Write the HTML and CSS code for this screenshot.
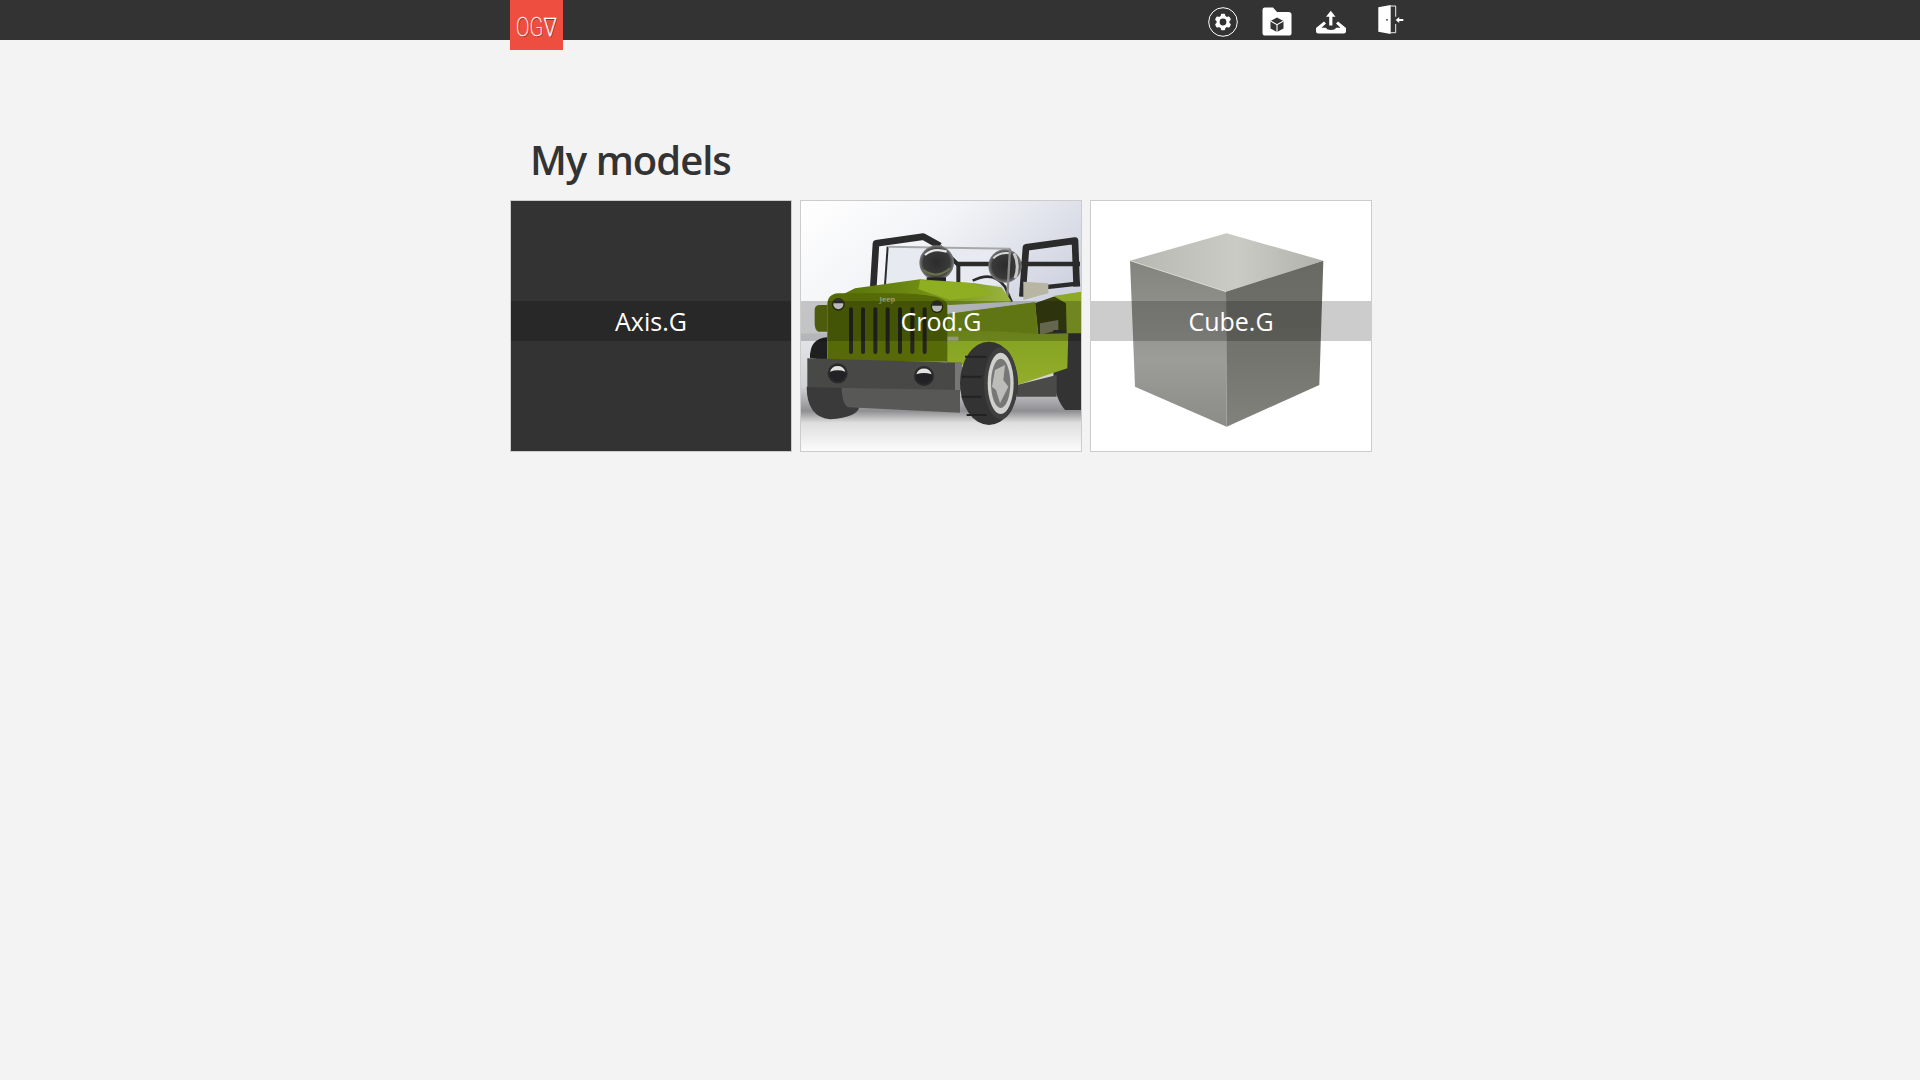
FILE: index.html
```html
<!DOCTYPE html>
<html lang="en">
<head>
<meta charset="utf-8">
<title>My models</title>
<link rel="stylesheet" href="styles.css">
</head>
<body>
<header class="topbar">
  <div class="topbar-inner">
    <a class="logo"><span class="logo-text">OG∇</span></a>
    <nav class="tools">
      <a class="tool">
        <svg viewBox="0 0 30 30" width="30" height="30">
          <circle cx="15" cy="15" r="14.3" fill="none" stroke="#fff" stroke-width="1"/>
          <g fill="#fff">
            <rect x="12.800" y="6.800" width="4.400" height="16.400" rx="1.200"/>
            <rect x="12.800" y="6.800" width="4.400" height="16.400" rx="1.200" transform="rotate(60 15 15)"/>
            <rect x="12.800" y="6.800" width="4.400" height="16.400" rx="1.200" transform="rotate(120 15 15)"/>
          </g>
          <circle cx="15" cy="15" r="6.500" fill="#fff"/>
          <circle cx="15" cy="15" r="3.400" fill="#333"/>
        </svg>
      </a>
      <a class="tool">
        <svg viewBox="0 0 30 30" width="30" height="30"><path fill="#fff" d="M1 3.500Q1 1 3 1h8.500l4 4.500H27Q30 5.500 30 8v19q0 2-2 2H3q-2 0-2-2z" transform="translate(-.5 -.5)"/><path fill="#333" d="M15 10.500l6.500 3.600v7.300L15 25l-6.500-3.600v-7.300z"/><path fill="none" stroke="#fff" stroke-width="1.100" d="M8.500 14.100L15 17.700l6.500-3.600M15 17.700V25"/></svg>
      </a>
      <a class="tool">
        <svg viewBox="0 0 30 30" width="30" height="30"><path fill="#fff" d="M14.800 3.700L19.500 9.700H16.400V18.500H13.200V9.700H10z"/><path fill="#fff" d="M8 14.500L10 16.500 5.500 20.800H10Q11 23 15 23 19 23 20 20.800H24.500L20 16.500 22 14.500 30 21V24Q30 26.500 27.500 26.500H2.500Q0 26.500 0 24V21z"/></svg>
      </a>
      <a class="tool door">
        <svg viewBox="0 0 30 30" width="30" height="30"><path fill="#fff" d="M2.300 2.300L14.700 0V29L2.300 26.700z"/><circle cx="11" cy="14.800" r=".9" fill="#333"/><path fill="none" stroke="#fff" stroke-width=".9" d="M14.700 1H19.700V11.700M19.700 19V27.700H14.700"/><path fill="#fff" d="M19.700 15L23.200 12V14H27.300V16H23.200V18z"/></svg>
      </a>
    </nav>
  </div>
</header>

<main class="page">
  <h1 class="title">My models</h1>
  <section class="grid">
    <article class="card card-dark">
      <div class="band">Axis.G</div>
    </article>

    <article class="card">
      <svg class="thumb" viewBox="33 33 840 750" preserveAspectRatio="none">
        <defs>
          <linearGradient id="sky" x1="0" y1="0" x2="1" y2="0.55"><stop offset="0" stop-color="#fff"/><stop offset=".45" stop-color="#f3f4f7"/><stop offset="1" stop-color="#cfd3e0"/></linearGradient>
          <linearGradient id="floor" x1="0" y1="0" x2="0" y2="1"><stop offset="0" stop-color="#e4e5e8"/><stop offset=".45" stop-color="#d2d3d8"/><stop offset=".66" stop-color="#8f8f92"/><stop offset=".76" stop-color="#dedede"/><stop offset="1" stop-color="#fbfbfb"/></linearGradient>
          <linearGradient id="lime" x1="0" y1="0" x2="0" y2="1"><stop offset="0" stop-color="#7d9a1e"/><stop offset="1" stop-color="#93ae2a"/></linearGradient>
          <linearGradient id="hood" x1="0" y1="0" x2="1" y2="0"><stop offset="0" stop-color="#566f08"/><stop offset=".5" stop-color="#6f8c12"/><stop offset="1" stop-color="#9cb540"/></linearGradient>
          <radialGradient id="ball" cx=".5" cy=".5" r=".55"><stop offset="0" stop-color="#2c2c2c"/><stop offset=".7" stop-color="#3a3a3a"/><stop offset="1" stop-color="#9a9a9a"/></radialGradient>
        </defs>
        <rect x="33" y="33" width="840" height="400" fill="url(#sky)"/>
        <rect x="33" y="430" width="840" height="353" fill="url(#floor)"/>
        <path d="M285 285L297 168 660 176 650 285z" fill="#e8eaf2"/>
        <g fill="none" stroke="#2b2b2b" stroke-linejoin="round">
          <path stroke-width="20" d="M250 290L258 160 400 140 450 168"/>
          <path stroke-width="12" d="M450 170L505 225V280"/>
          <path stroke-width="13" d="M500 222H870M690 300L870 280"/>
          <path stroke-width="20" d="M697 320L708 172 855 152 860 290"/>
          <path stroke-width="6" d="M293 170L285 285"/>
          <path stroke-width="8" d="M548 272Q610 240 645 290L665 335"/>
        </g>
        <path d="M295 170L660 176" fill="none" stroke="#a6a8a8" stroke-width="6"/>
        <circle cx="440" cy="218" r="52" fill="url(#ball)"/>
        <path d="M405 195Q430 172 470 185" fill="none" stroke="#e8e8e8" stroke-width="7"/>
        <path d="M400 240Q440 270 480 235" fill="none" stroke="#66704a" stroke-width="7"/>
        <circle cx="645" cy="228" r="50" fill="url(#ball)"/>
        <path d="M610 205Q630 185 660 190" fill="none" stroke="#d8d8d8" stroke-width="6"/>
        <path d="M672 190Q690 225 675 265" fill="none" stroke="#c8c8c8" stroke-width="9"/>
        <path d="M660 176L652 320" fill="none" stroke="#8a8a8a" stroke-width="7"/>
        <rect x="410" y="262" width="58" height="14" fill="#222"/>
        <path d="M700 275L775 280V310L700 330z" fill="#b9b5a4"/>
        <path d="M735 340L790 320H873V440H745z" fill="#39400f"/>
        <path d="M750 400L805 390V420L750 435z" fill="#7d8061"/>
        <path d="M790 420H873V660H825Q790 620 790 540z" fill="#333"/>
        <path d="M680 585L800 555V620L680 620z" fill="#4a4a48"/>
        <path d="M115 335L195 295 390 268 555 280 635 292 665 335 480 345 300 330z" fill="url(#hood)"/>
        <path d="M390 270L555 280 610 315 480 330 385 298z" fill="#8fae22"/>
        <path d="M790 318L873 305V430L830 430 828 340z" fill="#8ea828"/>
        <path d="M470 372L735 337 745 432 835 430 832 535 682 585 600 525 470 525z" fill="url(#lime)"/>
        <path d="M480 372L735 337 742 432 650 425 480 420z" fill="#79941a"/>
        <path d="M470 440H505V452H470z" fill="#b9bca6"/>
        <path d="M74 360Q74 345 90 345H112V425H85Q74 420 74 400z" fill="#5f7410"/>
        <path d="M60 505Q58 445 112 442V510z" fill="#1f1f1f"/>
        <path d="M112 345Q112 312 145 310L300 310Q470 310 472 345L472 515H112z" fill="#566a08"/>
        <text x="292" y="335" class="jeep-badge">Jeep</text>
        <g fill="#26261e">
          <rect x="177" y="352" width="12" height="140" rx="6"/>
          <rect x="213" y="352" width="12" height="140" rx="6"/>
          <rect x="250" y="352" width="12" height="140" rx="6"/>
          <rect x="287" y="352" width="12" height="140" rx="6"/>
          <rect x="324" y="352" width="12" height="140" rx="6"/>
          <rect x="361" y="352" width="12" height="140" rx="6"/>
          <rect x="398" y="352" width="12" height="140" rx="6"/>
        </g>
        <circle cx="145" cy="343" r="19" fill="#2e3308"/><circle cx="145" cy="343" r="15" fill="#e8e8e8"/><path d="M130 340a15 15 0 0 1 30 0z" fill="#333"/>
        <circle cx="441" cy="350" r="19" fill="#2e3308"/><circle cx="441" cy="350" r="15" fill="#e8e8e8"/><path d="M426 347a15 15 0 0 1 30 0z" fill="#333"/>
        <path d="M50 590Q50 680 120 688 205 680 208 650L205 590z" fill="#3a3a3a"/>
        <path d="M155 590H510V668L175 652Q155 640 155 590z" fill="#585856"/>
        <path d="M52 505L515 518V600L52 592z" fill="#484846"/>
        <path d="M495 518h20v82h-20z" fill="#777"/>
        <circle cx="143" cy="550" r="30" fill="#2a2a2a"/><circle cx="143" cy="550" r="24" fill="#222226"/><path d="M120 545a24 24 0 0 1 46 0q-23-8-46 0z" fill="#e2e2e2"/>
        <circle cx="402" cy="558" r="30" fill="#2a2a2a"/><circle cx="402" cy="558" r="24" fill="#222226"/><path d="M379 553a24 24 0 0 1 46 0q-23-8-46 0z" fill="#e2e2e2"/>
        <ellipse cx="597" cy="580" rx="87" ry="125" fill="#333"/>
        <path d="M525 500H590M515 560H575M515 620H575M530 675H590" stroke="#222" stroke-width="6" fill="none"/>
        <ellipse cx="632" cy="580" rx="50" ry="108" fill="#3f3f3f"/>
        <ellipse cx="632" cy="580" rx="39" ry="92" fill="#d0d0cc"/>
        <ellipse cx="632" cy="580" rx="29" ry="74" fill="#777"/>
        <path d="M615 540L645 525 640 570 655 590 630 640 618 600 606 590z" fill="#bcbcb8"/>
      </svg>
      <div class="band">Crod.G</div>
    </article>

    <article class="card">
      <svg class="thumb" viewBox="33 33 840 750" preserveAspectRatio="none">
        <defs>
          <linearGradient id="ctop" x1="0" y1="0" x2="1" y2="0"><stop offset="0" stop-color="#b8b8b2"/><stop offset=".55" stop-color="#cbcbc5"/><stop offset="1" stop-color="#b2b2ac"/></linearGradient>
          <linearGradient id="cleft" x1="0" y1="0" x2="0" y2="1"><stop offset="0" stop-color="#84847f"/><stop offset=".6" stop-color="#9c9c98"/><stop offset="1" stop-color="#8b8b87"/></linearGradient>
          <linearGradient id="cright" x1="0" y1="0" x2="0" y2="1"><stop offset="0" stop-color="#696963"/><stop offset=".6" stop-color="#75756f"/><stop offset="1" stop-color="#82827d"/></linearGradient>
        </defs>
        <rect x="33" y="33" width="840" height="750" fill="#fff"/>
        <path d="M150 212L440 130 730 212 438 305z" fill="url(#ctop)"/>
        <path d="M150 212L438 305 440 710 165 590z" fill="url(#cleft)"/>
        <path d="M730 212L438 305 440 710 718 585z" fill="url(#cright)"/>
        <path d="M150 212L438 305" fill="none" stroke="#e6e6e2" stroke-width="2"/>
      </svg>
      <div class="band">Cube.G</div>
    </article>
  </section>
</main>
</body>
</html>
```
FILE: styles.css
```css
* { box-sizing: border-box; }

html, body {
  margin: 0;
  height: 100%;
}

body {
  background: #f3f3f3;
  color: #333;
  font-family: "Open Sans", "Liberation Sans", sans-serif;
}

.topbar {
  background: #333;
  height: 40px;
}

.topbar-inner {
  width: 900px;
  margin: 0 auto;
  display: flex;
  align-items: flex-start;
  padding-right: 4px;
}

.logo {
  width: 53px;
  height: 50px;
  background: #ee4e3f;
  display: flex;
  justify-content: center;
}

.logo-text {
  color: #fff;
  font-family: Roboto, "DejaVu Sans", sans-serif;
  font-weight: 100;
  font-size: 25px;
  line-height: 56px;
  white-space: nowrap;
  transform: scaleX(.8);
  -webkit-text-stroke: .3px #fff;
  text-shadow: 1px 1px 0 rgba(90, 30, 20, .6);
}

.tools {
  margin-left: auto;
  display: flex;
  gap: 24px;
  padding-top: 7px;
}

.tool {
  display: block;
  width: 30px;
  height: 30px;
}

.tool svg { display: block; }

.door {
  margin-left: 6px;
  margin-top: -2px;
}

.page {
  width: 900px;
  margin: 0 auto;
}

.title {
  margin: 0;
  padding: 90px 0 0 20px;
  height: 160px;
  font-size: 40px;
  font-weight: 600;
  line-height: 60px;
  letter-spacing: -1px;
}

.grid {
  display: flex;
  gap: 8px;
}

.card {
  position: relative;
  width: 282px;
  height: 252px;
  border: 1px solid #ccc;
  background: #fff;
  overflow: hidden;
}

.card-dark { background: #333; }

.thumb {
  display: block;
  width: 280px;
  height: 250px;
}

.jeep-badge {
  font-family: "Open Sans", sans-serif;
  font-size: 22px;
  font-weight: 700;
  fill: #9aa07a;
  text-anchor: middle;
}

.band {
  position: absolute;
  left: 0;
  right: 0;
  top: 100px;
  height: 40px;
  background: rgba(0, 0, 0, .2);
  color: #fff;
  font-size: 25px;
  line-height: 40px;
  text-align: center;
}
```
